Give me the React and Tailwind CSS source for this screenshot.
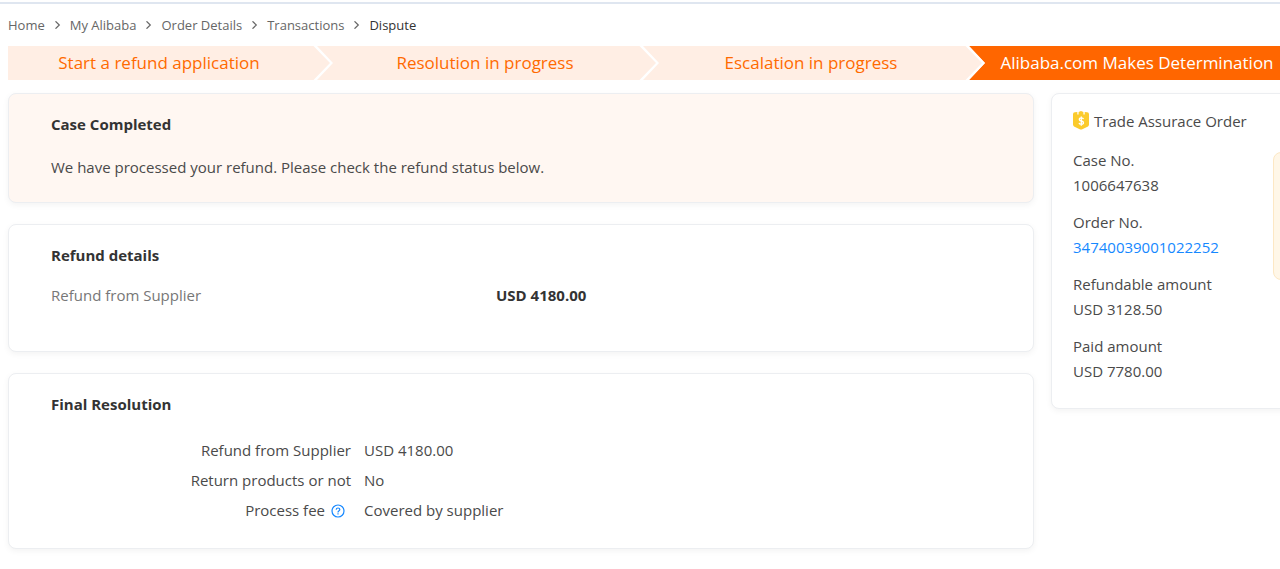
import React from "react";

const crumbs = ["Home", "My Alibaba", "Order Details", "Transactions"];

const steps = [
  "Start a refund application",
  "Resolution in progress",
  "Escalation in progress",
  "Alibaba.com Makes Determination",
];

const orderInfo = [
  { label: "Case No.", value: "1006647638" },
  { label: "Order No.", value: "34740039001022252", link: true },
  { label: "Refundable amount", value: "USD 3128.50" },
  { label: "Paid amount", value: "USD 7780.00" },
];

const Chevron = () => (
  <svg className="mx-2 h-2 w-[9px]" viewBox="0 0 8 8" fill="none" stroke="#666" strokeWidth="1.2">
    <path d="M2 0.3 5.8 4 2 7.7" />
  </svg>
);

// Arrow between two steps, filled with the colours of both sides
const StepArrow = ({ next }) => (
  <svg className="h-full w-6 shrink-0" viewBox="0 0 24 34" preserveAspectRatio="none">
    <path d="M7 0H24V34H7L23 17Z" fill={next} />
    <path d="M0 0H4L20 17 4 34H0Z" fill="#ffeee4" />
    <path d="M3.5 0H7L23 17 7 34H3.5L20 17Z" fill="#fff" />
  </svg>
);

const AssuranceIcon = () => (
  <svg className="h-5 w-4 shrink-0" viewBox="0 0 16 20">
    <path
      d="M0 3.2Q0 1.4 1.8 1.3L4.3 1V3.6H5.6V0.9L8 0 10.4 0.9V3.6H11.7V1L14.2 1.3Q16 1.4 16 3.2V13.5Q16 14.8 15 15.4L8.8 18.4Q8 18.8 7.2 18.4L1 15.4Q0 14.8 0 13.5Z"
      fill="#fbcb2c"
    />
    <path
      d="M10.5 8.1Q10.2 6.8 8.3 6.8 6.3 6.8 6.3 8.4 6.3 9.6 8.3 10 10.5 10.4 10.5 11.8 10.5 13.3 8.4 13.3 6.3 13.3 6 11.8M8.3 5.4V14.8"
      fill="none"
      stroke="#fff"
      strokeWidth="1.3"
    />
  </svg>
);

const HelpIcon = () => (
  <svg className="h-[14px] w-[14px]" viewBox="0 0 14 14" fill="none" stroke="#1688ff" strokeWidth="1.2">
    <circle cx="7" cy="7" r="6" />
    <path d="M5.2 5.6Q5.3 4 7 4 8.8 4 8.8 5.5 8.8 6.3 7.8 6.9 7 7.4 7 8.4M7 9.2V10.5" />
  </svg>
);

const Card = ({ className = "bg-white", children }) => (
  <section className={`rounded-lg border border-[#eceef1] px-[42px] pt-[18px] shadow-[0_2px_6px_rgba(0,0,0,0.05)] ${className}`}>
    {children}
  </section>
);

const Title = ({ children }) => (
  <h2 className="text-[15px] leading-6 font-bold text-[#333]">{children}</h2>
);

const Resolution = ({ label, value, help }) => (
  <div className="flex h-[30px] items-center gap-[13px]">
    <dt className="flex w-[300px] items-center justify-end gap-[6px]">
      {label}
      {help && (
        <button type="button" aria-label="Process fee help" className="mt-[2px] mr-[6px]">
          <HelpIcon />
        </button>
      )}
    </dt>
    <dd>{value}</dd>
  </div>
);

const App = () => {
  return (
    <div className="min-h-screen overflow-hidden border-t-2 border-white bg-white font-['Open_Sans',sans-serif] text-[15px] leading-6 text-[#4a4a4a]">
      <div className="h-[2px] bg-[#dfe6f0]" />
      {/* the page is wider than the window and runs off its right edge */}
      <div className="w-[calc(100%+36px)] pl-2">
        <nav className="flex h-[42px] items-center text-[13px] text-[#666]">
          {crumbs.map((crumb) => (
            <React.Fragment key={crumb}>
              <a href="#">{crumb}</a>
              <Chevron />
            </React.Fragment>
          ))}
          <span className="text-[#333]">Dispute</span>
        </nav>

        <ol className="mr-1 flex h-[34px] text-[17px]">
          {steps.map((step, index) => {
            const last = index === steps.length - 1;
            return (
              <li
                key={step}
                className={`flex w-1/4 items-center ${
                  last ? "bg-[#ff6600] pr-6 text-white" : "bg-[#ffeee4] text-[#ff6a00]"
                }`}
              >
                <span className="flex-1 text-center whitespace-nowrap">{step}</span>
                {!last && <StepArrow next={index === 2 ? "#ff6600" : "#ffeee4"} />}
              </li>
            );
          })}
        </ol>

        <div className="mt-[13px] flex items-start gap-[17px]">
          <main className="flex flex-1 flex-col gap-[21px]">
            <Card className="bg-[#fff7f2] pb-[23px]">
              <Title>Case Completed</Title>
              <p className="mt-[19px]">
                We have processed your refund. Please check the refund status below.
              </p>
            </Card>

            <Card className="bg-white pb-[44px]">
              <Title>Refund details</Title>
              <div className="mt-4 flex">
                <span className="w-[445px] text-[#777]">Refund from Supplier</span>
                <span className="font-bold text-[#333]">USD 4180.00</span>
              </div>
            </Card>

            <Card className="bg-white pb-[23px]">
              <Title>Final Resolution</Title>
              <dl className="mt-[19px]">
                <Resolution label="Refund from Supplier" value="USD 4180.00" />
                <Resolution label="Return products or not" value="No" />
                <Resolution label="Process fee" value="Covered by supplier" help />
              </dl>
            </Card>
          </main>

          <aside className="relative w-[265px] rounded-lg border border-[#eceef1] bg-white px-[21px] pt-[15px] pb-6 shadow-[0_2px_6px_rgba(0,0,0,0.05)]">
            <h2 className="flex items-center gap-[5px]">
              <AssuranceIcon />
              Trade Assurace Order
            </h2>
            <dl className="mt-[15px] flex flex-col gap-3">
              {orderInfo.map(({ label, value, link }) => (
                <div key={label} className="leading-[25px]">
                  <dt>{label}</dt>
                  <dd>
                    {link ? (
                      <a href="#" className="text-[#1688ff]">
                        {value}
                      </a>
                    ) : (
                      value
                    )}
                  </dd>
                </div>
              ))}
            </dl>
            <div className="absolute top-[58px] -right-6 h-32 w-[66px] rounded-lg border border-[#fde8c4] bg-[#fff7e8]" />
          </aside>
        </div>
      </div>
    </div>
  );
};

export default App;
